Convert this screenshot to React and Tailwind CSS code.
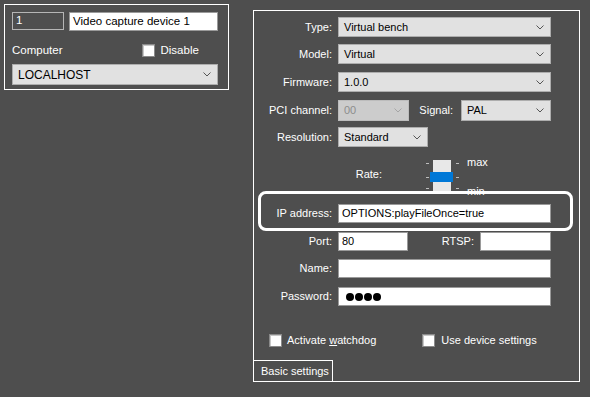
import React from 'react'

function Chevron({ color = '#444' }) {
  return (
    <svg width="8" height="5" viewBox="0 0 8 5">
      <path d="M0.5 0.5 L4 4 L7.5 0.5" fill="none" stroke={color} strokeWidth="1" />
    </svg>
  )
}

function Select({ value, className = '', disabled }) {
  return (
    <div
      className={`flex h-[20px] items-center justify-between border pl-[5px] pr-[6px] ${
        disabled ? 'border-[#bcbcbc] bg-[#cccccc] text-[#8d8d8d]' : 'border-[#adadad] bg-[#e1e1e1] text-black'
      } ${className}`}
    >
      <span>{value}</span>
      <Chevron color={disabled ? '#a5a5a5' : '#555'} />
    </div>
  )
}

function Input({ value, className = '' }) {
  return (
    <div className={`flex h-[19px] items-center border border-[#9a9a9a] bg-white pl-[3px] text-black ${className}`}>
      {value}
    </div>
  )
}

function Checkbox() {
  return <div className="h-[13px] w-[13px] border border-[#8a8a8a] bg-white shadow-[inset_1px_1px_0_#c8c8c8]" />
}

function Row({ label, children, className = '' }) {
  return (
    <div className={`flex items-center gap-[6px] ${className}`}>
      <span className="w-[78px] text-right">{label}</span>
      {children}
    </div>
  )
}

function Tick({ className }) {
  return <div className={`absolute h-px w-[3px] bg-[#bdbdbd] ${className}`} />
}

function RateSlider() {
  return (
    <div className="flex items-start">
      <span className="mt-[12px] w-[128px] text-right">Rate:</span>
      <div className="relative ml-[42px] h-[36px] w-[38px]">
        <div className="absolute left-[9px] top-[3px] bottom-0 w-[18px] bg-[#e8e8e8]" />
        <div className="absolute left-[6px] top-[15px] h-[10px] w-[23px] bg-[#0078d7]" />
        <Tick className="left-[2px] top-[6px]" />
        <Tick className="left-[2px] top-[20px]" />
        <Tick className="left-[2px] top-[31px]" />
        <Tick className="left-[32px] top-[6px]" />
        <Tick className="left-[32px] top-[20px]" />
        <Tick className="left-[32px] top-[31px]" />
      </div>
      <div className="ml-[5px] flex h-[36px] flex-col justify-between leading-[12px]">
        <span className="-mt-px">max</span>
        <span className="mb-[-4px]">min</span>
      </div>
    </div>
  )
}

export default function App() {
  return (
    <div
      className="relative h-[397px] w-[590px] overflow-hidden bg-[#4e4e4e] text-[11px] leading-none text-white"
      style={{ fontFamily: '"Liberation Sans", Arial, sans-serif' }}
    >
      <div className="flex items-start pl-[4px] pt-[4px]">
        {/* device header */}
        <div className="flex h-[86px] w-[225px] flex-col border border-white px-[7px] pt-[7px]">
          <div className="flex gap-[5px] text-[11.5px]">
            <div className="flex h-[18px] w-[52px] items-center border border-[#b5b5b5] pl-[3px]">1</div>
            <Input value="Video capture device 1" className="h-[18px] w-[149px]" />
          </div>
          <div className="mt-[13px] flex items-center text-[11.5px]">
            <span>Computer</span>
            <div className="ml-[79px]"><Checkbox /></div>
            <span className="ml-[6px]">Disable</span>
          </div>
          <Select value="LOCALHOST" className="mt-[7px] h-[21px] w-[206px] text-[12px]" />
        </div>

        {/* settings panel */}
        <div className="ml-[24px] mt-[6px] flex h-[372px] w-[327px] flex-col border border-white">
          <Row label="Type:" className="mt-[6px]">
            <Select value="Virtual bench" className="w-[213px]" />
          </Row>
          <Row label="Model:" className="mt-[7px]">
            <Select value="Virtual" className="w-[213px]" />
          </Row>
          <Row label="Firmware:" className="mt-[8px]">
            <Select value="1.0.0" className="w-[213px]" />
          </Row>
          <Row label="PCI channel:" className="mt-[8px]">
            <Select value="00" disabled className="h-[21px] w-[71px]" />
            <span className="w-[38px] text-right">Signal:</span>
            <Select value="PAL" className="ml-[2px] h-[21px] w-[90px]" />
          </Row>
          <Row label="Resolution:" className="mt-[6px]">
            <Select value="Standard" className="w-[90px]" />
          </Row>
          <div className="mt-[10px]">
            <RateSlider />
          </div>
          <Row label="IP address:" className="mt-[11px]">
            <Input value="OPTIONS:playFileOnce=true" className="w-[213px]" />
          </Row>
          <Row label="Port:" className="mt-[9px]">
            <Input value="80" className="w-[70px]" />
            <span className="w-[60px] text-right">RTSP:</span>
            <Input value="" className="w-[71px]" />
          </Row>
          <Row label="Name:" className="mt-[8px]">
            <Input value="" className="w-[213px]" />
          </Row>
          <Row label="Password:" className="mt-[9px]">
            <div className="flex h-[19px] w-[213px] items-center gap-[1px] border border-[#9a9a9a] bg-white pl-[7px]">
              {[0, 1, 2, 3].map(i => (
                <div key={i} className="h-[8px] w-[8px] rounded-full bg-black" />
              ))}
            </div>
          </Row>
          <div className="mt-[28px] flex items-center pl-[15px]">
            <Checkbox />
            <span className="ml-[5px]">
              Activate <span className="underline">w</span>atchdog
            </span>
            <div className="ml-[46px]"><Checkbox /></div>
            <span className="ml-[6px]">Use device settings</span>
          </div>
          <div className="mt-auto flex h-[21px] w-[79px] items-center border-r border-t border-white pl-[7px]">
            Basic settings
          </div>
        </div>
      </div>

      {/* highlight box */}
      <div className="absolute left-[258px] top-[191px] h-[40px] w-[315px] rounded-[8px] border-[3px] border-white" />
    </div>
  )
}
